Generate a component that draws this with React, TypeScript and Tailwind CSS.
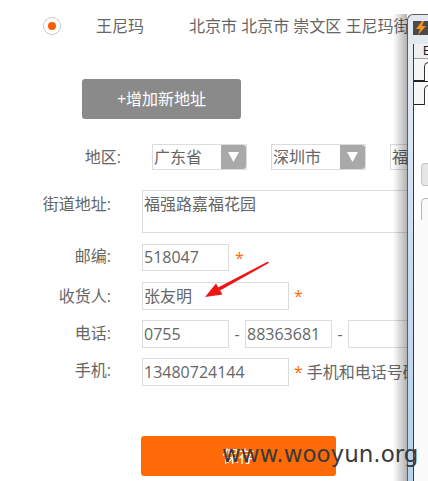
import React from "react";

function Select({ text }: { text: string }) {
  return (
    <div className="flex h-[26px] w-[95px] shrink-0 border border-[#dcdcdc] bg-white">
      <div className="flex-1 pl-[1px] leading-[24px] whitespace-nowrap overflow-hidden">{text}</div>
      <div className="flex w-[25px] items-center justify-center rounded-r-[3px] bg-[#a9a9a9]">
        <svg width="11" height="10" viewBox="0 0 11 10">
          <polygon points="0,0 11,0 5.5,10" fill="#fff" />
        </svg>
      </div>
    </div>
  );
}

function Input({ w, h = 28, text }: { w: number; h?: number; text?: string }) {
  return (
    <div
      className="shrink-0 border border-[#dcdcdc] bg-white pl-[1px] whitespace-nowrap overflow-hidden"
      style={{ width: w, height: h, lineHeight: `${h - 2}px` }}
    >
      {text}
    </div>
  );
}

function Label({ children, pt = "pt-[2px]" }: { children: React.ReactNode; pt?: string }) {
  return <div className={`w-[111px] shrink-0 text-right leading-[22px] ${pt}`}>{children}</div>;
}

export default function App() {
  return (
    <div className="relative h-[481px] w-[428px] overflow-hidden bg-white font-['Open_Sans','Noto_Sans_CJK_SC',sans-serif] text-[16px] text-[#666]">
      {/* address row */}
      <div className="flex h-[35px] items-center whitespace-nowrap pl-[43px] pt-[17px]">
        <span className="flex h-[18px] w-[18px] shrink-0 items-center justify-center rounded-full border border-[#c8c8c8]">
          <span className="h-[8px] w-[8px] rounded-full bg-[#ff5a00]" />
        </span>
        <span className="ml-[35px] leading-[18px]">王尼玛</span>
        <span className="ml-[45px] leading-[18px]">北京市 北京市 崇文区 王尼玛街道1号</span>
      </div>

      {/* add new address */}
      <div className="ml-[82px] mt-[44px] flex h-[40px] w-[159px] items-center justify-center rounded-[3px] bg-[#8a8a8a] text-white">
        +增加新地址
      </div>

      {/* form */}
      <div className="mt-[25px] flex flex-col">
        <div className="flex h-[26px] items-center pl-[10px] whitespace-nowrap">
          <div className="w-[111px] shrink-0 text-right leading-[22px]">地区:</div>
          <div className="ml-[31px] flex gap-[24px]">
            <Select text="广东省" />
            <Select text="深圳市" />
            <Select text="福田区" />
          </div>
        </div>

        <div className="mt-[20px] flex whitespace-nowrap">
          <Label pt="pt-[3px]">街道地址:</Label>
          <div className="ml-[31px] h-[43px] w-[320px] shrink-0 border border-[#dcdcdc] pl-[1px] pt-[2px] leading-[22px]">
            福强路嘉福花园
          </div>
        </div>

        <div className="mt-[11px] flex items-start whitespace-nowrap">
          <Label pt="pt-[1px]">邮编:</Label>
          <div className="ml-[31px] flex items-center">
            <Input w={87} h={27} text="518047" />
            <span className="ml-[6px] text-[#ff6a00]">*</span>
          </div>
        </div>

        <div className="mt-[11px] flex items-start whitespace-nowrap">
          <Label pt="pt-[3px]">收货人:</Label>
          <div className="ml-[31px] flex items-center">
            <Input w={147} text="张友明" />
            <span className="ml-[5px] text-[#ff6a00]">*</span>
          </div>
        </div>

        <div className="mt-[10px] flex items-start whitespace-nowrap">
          <Label>电话:</Label>
          <div className="ml-[31px] flex items-center">
            <Input w={87} text="0755" />
            <span className="w-[16px] text-center">-</span>
            <Input w={87} text="88363681" />
            <span className="w-[16px] text-center">-</span>
            <Input w={87} />
          </div>
        </div>

        <div className="mt-[10px] flex items-start whitespace-nowrap">
          <Label pt="pt-[1px]">手机:</Label>
          <div className="ml-[31px] flex items-center">
            <Input w={147} text="13480724144" />
            <span className="ml-[5px] text-[#ff6a00]">*</span>
            <span className="ml-[4px]">手机和电话号码至少填一项</span>
          </div>
        </div>

        <div className="ml-[141px] mt-[50px] flex h-[40px] w-[195px] items-center justify-center rounded-[3px] bg-[#ff6a08] text-white">
          保存
        </div>
      </div>

      {/* red arrow annotation */}
      <svg className="absolute left-0 top-0" width="428" height="481" viewBox="0 0 428 481">
        <polygon points="268,261.5 268.8,263 220,290.6 218,287.4" fill="#f01414" />
        <polygon points="205,297 216,283.5 222.5,294.5" fill="#f01414" />
      </svg>

      {/* window shadow */}
      <div className="absolute bottom-0 left-[393px] top-[14px] w-[14px] bg-linear-to-r from-transparent to-black/30" />

      {/* overlapping window */}
      <div className="absolute bottom-0 left-[407px] right-0 top-[14px] flex flex-col overflow-hidden rounded-tl-[6px] border-l border-t border-[#5e5e5e] bg-[#e3e9f0]">
        <div className="h-[29px] shrink-0 pl-[5px] pt-[6px]">
          <div className="flex h-[14px] w-[16px] items-center justify-center bg-[#4a4a4a]">
            <svg width="12" height="14" viewBox="0 0 12 14">
              <polygon points="7,0 1,8 5,8 3,14 11,5 7,5 9,0" fill="#f7931e" />
            </svg>
          </div>
        </div>
        <div className="flex flex-1">
          <div className="w-[5px] shrink-0 bg-linear-to-b from-[#e7edf4] via-[#c9dcef] to-[#b5d2ef]" />
          <div className="flex flex-1 flex-col border-l border-[#3a3a3a] bg-white">
            <div className="h-[15px] shrink-0 border-b border-[#a0a0a0] bg-[#f0f0f0] pl-[9px] font-['Liberation_Sans',sans-serif] text-[12px] leading-[14px] text-[#222]">
              Edit
            </div>
            <div className="flex h-[22px] shrink-0 items-end bg-[#f7f7f7]">
              <div className="w-[10px] border-b border-[#222]" />
              <div className="h-[19px] flex-1 rounded-tl-[5px] border-l border-t border-[#333] bg-white" />
            </div>
            <div className="flex h-[24px] shrink-0 items-end border-t border-[#222] bg-[#f7f7f7]">
              <div className="w-[10px] border-b border-[#222]" />
              <div className="h-[20px] flex-1 rounded-tl-[5px] border-l border-t border-[#333] bg-white" />
            </div>
            <div className="h-[58px] shrink-0" />
            <div className="ml-[7px] h-[23px] shrink-0 rounded-l-[4px] border border-r-0 border-[#c4c4c4] bg-[#e6e6e6]" />
            <div className="ml-[7px] mt-[12px] h-[22px] shrink-0 rounded-tl-[5px] border-l border-t border-[#b8b8b8] bg-[#fafafa]" />
            <div className="flex-1 bg-[#fbfbfb]" />
          </div>
        </div>
      </div>

      {/* watermark */}
      <div className="absolute left-[222px] top-[443px] whitespace-nowrap font-['DejaVu_Sans',sans-serif] text-[23px] leading-[23px] text-[#3a3a3a]">
        www.wooyun.org
      </div>
    </div>
  );
}
